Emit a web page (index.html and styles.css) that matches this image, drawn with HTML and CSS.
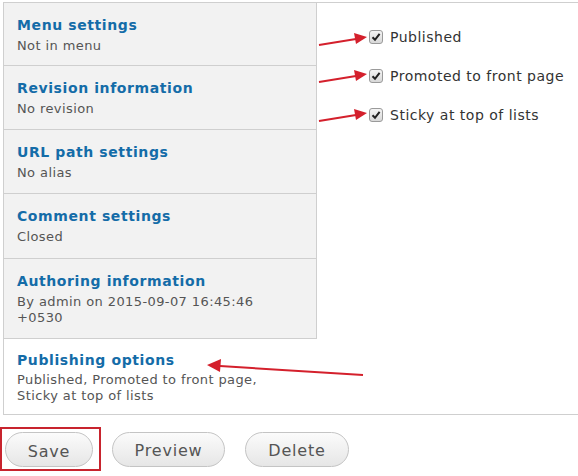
FILE: index.html
```html
<!DOCTYPE html>
<html>
<head>
<meta charset="utf-8">
<link rel="stylesheet" href="styles.css">
</head>
<body>
<div class="page">
  <div class="panel">
    <div class="tabs">
      <div class="tab h63"><div class="tab-title">Menu settings</div><div class="tab-sum">Not in menu</div></div>
      <div class="tab h64"><div class="tab-title">Revision information</div><div class="tab-sum">No revision</div></div>
      <div class="tab h64"><div class="tab-title">URL path settings</div><div class="tab-sum">No alias</div></div>
      <div class="tab h65"><div class="tab-title">Comment settings</div><div class="tab-sum">Closed</div></div>
      <div class="tab h80"><div class="tab-title">Authoring information</div><div class="tab-sum">By admin on 2015-09-07 16:45:46 +0530</div></div>
      <div class="tab active"><div class="tab-title">Publishing options</div><div class="tab-sum">Published, Promoted to front page, Sticky at top of lists</div></div>
    </div>
    <div class="pane">
      <label class="check"><span class="box"><svg width="10" height="10" viewBox="0 0 10 10"><path d="M1.5 5.2 L4 7.8 L8.6 1.8" fill="none" stroke="#222" stroke-width="2"/></svg></span>Published</label>
      <label class="check"><span class="box"><svg width="10" height="10" viewBox="0 0 10 10"><path d="M1.5 5.2 L4 7.8 L8.6 1.8" fill="none" stroke="#222" stroke-width="2"/></svg></span>Promoted to front page</label>
      <label class="check"><span class="box"><svg width="10" height="10" viewBox="0 0 10 10"><path d="M1.5 5.2 L4 7.8 L8.6 1.8" fill="none" stroke="#222" stroke-width="2"/></svg></span>Sticky at top of lists</label>
    </div>
  </div>
  <div class="actions">
    <div class="highlight"><button class="btn save">Save</button></div>
    <button class="btn preview">Preview</button>
    <button class="btn delete">Delete</button>
  </div>
</div>
<svg class="arrows" width="578" height="476" viewBox="0 0 578 476">
  <g stroke="#d4202c" stroke-width="2" fill="#d4202c">
    <line x1="319" y1="45" x2="356" y2="39"/>
    <polygon points="367,37 354,33 356,44" stroke="none"/>
    <line x1="319" y1="82" x2="356" y2="76"/>
    <polygon points="367,74 354,70 356,81" stroke="none"/>
    <line x1="319" y1="121" x2="356" y2="115"/>
    <polygon points="367,113 354,109 356,120" stroke="none"/>
    <line x1="363" y1="375" x2="220" y2="366"/>
    <polygon points="207,365 221,359 220,372" stroke="none"/>
  </g>
</svg>
</body>
</html>
```

FILE: styles.css
```css
html, body {
  margin: 0;
  padding: 0;
  background: #fff;
  overflow: hidden;
}
body {
  width: 578px;
  height: 476px;
  position: relative;
  font-family: "DejaVu Sans", Verdana, sans-serif;
}
.page {
  padding: 2px 0 0 3px;
}
.panel {
  display: flex;
  width: 620px;
  border: 1px solid #cfcfcf;
  border-right: none;
}
.tabs {
  width: 313px;
  display: flex;
  flex-direction: column;
  flex-shrink: 0;
}
.tab {
  box-sizing: border-box;
  background: #f2f2f2;
  border-right: 1px solid #cfcfcf;
  border-bottom: 1px solid #cfcfcf;
  padding: 12px 20px 0 13px;
}
.h63 { height: 63px; }
.h64 { height: 64px; }
.h65 { height: 65px; }
.h80 { height: 80px; }
.tab.active {
  background: #fff;
  border-right: none;
  border-bottom: none;
  height: 75px;
  padding-top: 11px;
}
.tab-title {
  color: #146ca8;
  font-weight: bold;
  font-size: 14px;
  letter-spacing: 0.6px;
  line-height: 20px;
}
.tab-sum {
  color: #555;
  font-size: 13px;
  letter-spacing: 0.4px;
  line-height: 16px;
  margin-top: 3px;
}
.tab.active .tab-sum {
  line-height: 16px;
  margin-top: 2px;
}
.pane {
  flex: 1;
  padding: 24px 0 0 52px;
  display: flex;
  flex-direction: column;
  gap: 19px;
}
.check {
  display: flex;
  align-items: center;
  gap: 7px;
  font-size: 14px;
  letter-spacing: 0.5px;
  color: #333;
  line-height: 20px;
}
.box {
  box-sizing: border-box;
  width: 14px;
  height: 14px;
  border: 1px solid #9a9a9a;
  border-radius: 3px;
  background: linear-gradient(#f4f4f4, #d8d8d8);
  display: flex;
  align-items: center;
  justify-content: center;
}
.actions {
  display: flex;
  align-items: center;
  gap: 19px;
  margin-top: 12px;
  margin-left: -3px;
}
.highlight {
  border: 2px solid #c8242e;
  padding: 3px 6px 2px 3px;
}
.btn {
  box-sizing: border-box;
  height: 35px;
  border: 1px solid #c4c4c4;
  border-radius: 18px;
  background: linear-gradient(#fbfbfb, #e6e6e6);
  color: #555;
  font-family: "DejaVu Sans", Verdana, sans-serif;
  font-size: 16px;
  letter-spacing: 0.8px;
  padding: 3px 0 0 0;
}
.save { width: 88px; }
.preview { width: 113px; margin-left: -8px; }
.delete { width: 104px; margin-left: 1px; }
.arrows {
  position: absolute;
  left: 0;
  top: 0;
  pointer-events: none;
}
```
